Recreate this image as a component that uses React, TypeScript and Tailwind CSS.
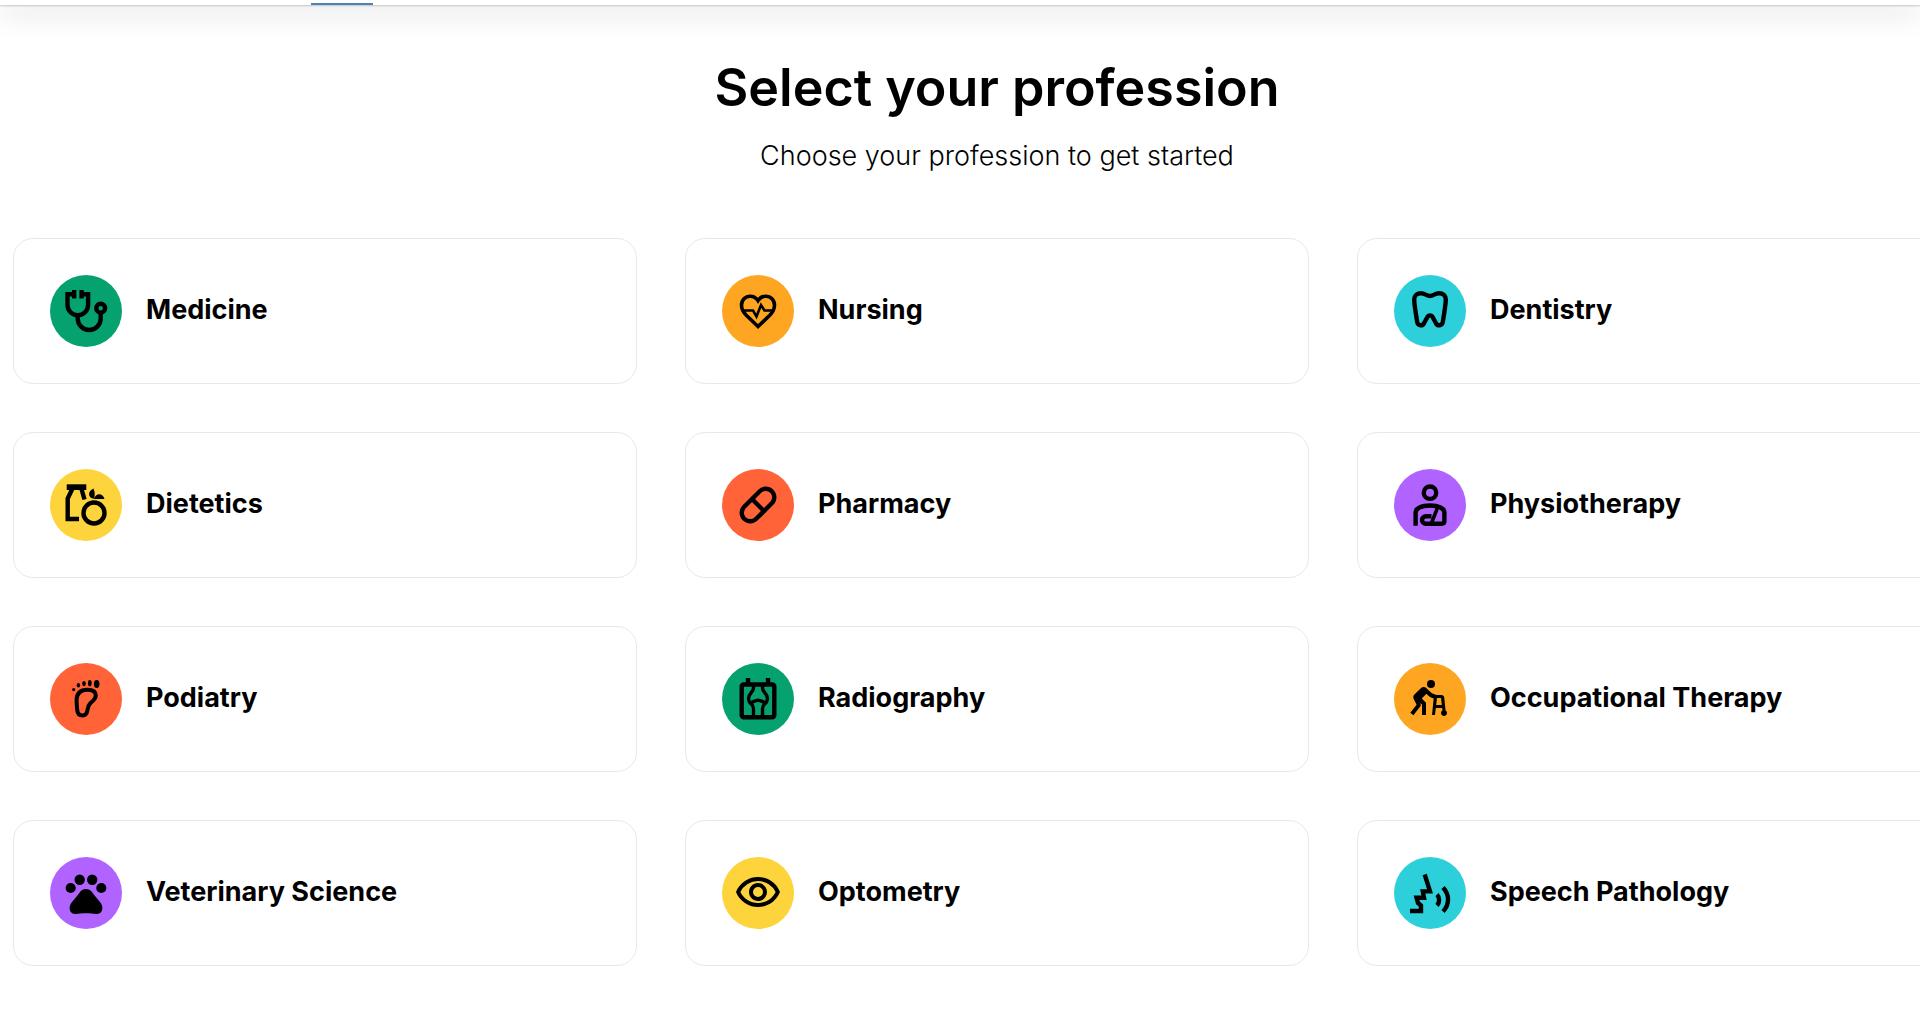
import type { ReactNode } from 'react';
import { MdAssistWalker, MdOutlineVisibility } from 'react-icons/md';

function Glyph({ children }: { children: ReactNode }) {
  return (
    <svg
      viewBox="0 0 72 72"
      className="size-full"
      fill="none"
      stroke="currentColor"
      strokeWidth="4.4"
      aria-hidden="true"
    >
      {children}
    </svg>
  );
}

const Stethoscope = () => (
  <Glyph>
    <path d="M25.5 19.3H17.5V30a10.3 10.3 0 0 0 20.6 0V19.3H30" />
    <path d="M24.2 15v8.6M31.6 15v8.6" />
    <path d="M27.7 40v3.5a11.5 11.5 0 0 0 23 0V38" />
    <circle cx="50.7" cy="33.2" r="4.4" />
  </Glyph>
);

const HeartPulse = () => (
  <Glyph>
    <path
      strokeWidth="3.6"
      d="M36 51.5 24.5 40.5C21.5 37.5 19.5 34.5 19.5 30.2c0-5.2 3.8-9 8.7-9 3.2 0 6 1.6 7.8 4.4 1.8-2.8 4.6-4.4 7.8-4.4 4.9 0 8.7 3.8 8.7 9 0 4.3-2 7.3-5 10.3z"
    />
    <path strokeWidth="2.6" d="M20 35.5h11l3.500 6 4.500-11.500 3.500 5.500H52" />
  </Glyph>
);

const Tooth = () => (
  <Glyph>
    <path d="M20.2 24.5c0-4 3-6.300 6.800-6.300s5.500 2.800 9 2.800 5-2.800 9-2.800 6.800 2.300 6.800 6.300c0 2-2 16.500-3 22.500-.6 3.800-5.300 4.400-6.800 1.200L38.600 42c-1-2.200-4.200-2.200-5.200 0L30 48.200c-1.500 3.200-6.200 2.600-6.800-1.200-1-6-3-20.500-3-22.500z" />
  </Glyph>
);

const Nutrition = () => (
  <Glyph>
    <path d="M22.5 19.5 17.7 29.5v20.5H29" />
    <path d="m31.5 20 3 10.5" />
    <path fill="currentColor" stroke="none" d="M16.7 15.3h19.6v5.7H16.7z" />
    <circle cx="44" cy="44" r="10.5" />
    <path
      fill="currentColor"
      stroke="none"
      d="M44 29.8c-6.5-.8-6.500-7.800-.5-10.300 1.700 4 1.500 7 .5 10.300zM44 30c1.500-6.500 9-6.500 10.500 0z"
    />
  </Glyph>
);

const Pill = () => (
  <Glyph>
    <g transform="rotate(-45 36 36)">
      <rect x="16.5" y="27.5" width="39" height="17" rx="8.5" />
      <path d="M36 27.5v17" />
    </g>
  </Glyph>
);

const ArmSling = () => (
  <Glyph>
    <circle cx="36" cy="23.7" r="6.2" />
    <path d="M21.6 56.800V43.500c0-4 5.500-7 14.400-7s14.400 3 14.400 7v8.500c0 1.600-1 2.700-2.700 2.700H32c-5.300 0-5.300-7.400 0-7.400h5.500" />
    <path strokeWidth="3.6" d="m44 37.500-6.500 16.500" />
  </Glyph>
);

const Foot = () => (
  <Glyph>
    <path
      strokeWidth="4"
      d="M37.5 26.7c5.800 0 8.300 2.300 8.300 5.800s-2.800 5-5.300 7.500c-2.200 2.200-2.700 4-3.100 7.200-.6 4-2.200 5.300-4.900 5.300-3.200 0-5-2-5.300-5.500-.2-3.500-.6-6.500-.6-9.500 0-7.500 4-10.800 10.900-10.800z"
    />
    <g fill="currentColor" stroke="none">
      <ellipse cx="46.7" cy="21" rx="2.8" ry="4" />
      <ellipse cx="39.8" cy="20.2" rx="1.9" ry="3.1" />
      <ellipse cx="34" cy="20.6" rx="1.8" ry="2.6" />
      <ellipse cx="28.4" cy="22.3" rx="1.7" ry="2.2" />
      <circle cx="23.7" cy="26.6" r="1.6" />
    </g>
  </Glyph>
);

const Xray = () => (
  <Glyph>
    <rect x="19.7" y="21.5" width="32.6" height="32.8" rx="2" />
    <path d="M26 15v6M46 15v6" />
    <path
      strokeWidth="3.4"
      d="M31.5 22v3c0 4-5 5.500-5 10.500 0 5.500 5 5 5 10V54M40.500 22v3c0 4 5 5.500 5 10.500 0 5.500-5 5-5 10V54"
    />
    <path strokeWidth="3.4" d="M27 39.5c3 1 5-2.300 9-2.300s6 3.300 9 2.300" />
  </Glyph>
);

const Walker = () => <MdAssistWalker className="size-12" aria-hidden="true" />;

const Paw = () => (
  <Glyph>
    <g fill="currentColor" stroke="none">
      <circle cx="29.7" cy="22.7" r="5.2" />
      <circle cx="42.2" cy="22.7" r="5.2" />
      <circle cx="20.7" cy="31" r="5.1" />
      <circle cx="51.3" cy="31" r="5.1" />
      <path d="M36 32c-3 0-4.800 1.200-6.500 3.700-2.500 3.500-5 6-7.500 9.300-4.500 5.500-2.300 12 3.500 12 3.500 0 6-.7 10.500-.7s7 .7 10.500.7c5.800 0 8-6.500 3.500-12-2.500-3.300-5-5.800-7.500-9.300C40.800 33.200 39 32 36 32z" />
    </g>
  </Glyph>
);

const Eye = () => <MdOutlineVisibility className="size-12" aria-hidden="true" />;

const Speech = () => (
  <Glyph>
    <path d="m30.7 17.5 5.300 16.900h-7.200l1.200 6.300h-7.500l1.500 5.300 3 2.500V54H16" />
    <path d="M43 37.5c2.800 3 2.800 8 0 11M49 30.500c6.700 7 6.700 17 0 24" />
  </Glyph>
);

const professions = [
  { name: 'Medicine', color: 'bg-[#05a26f]', Icon: Stethoscope },
  { name: 'Nursing', color: 'bg-[#fea621]', Icon: HeartPulse },
  { name: 'Dentistry', color: 'bg-[#2dd0da]', Icon: Tooth },
  { name: 'Dietetics', color: 'bg-[#fdd43b]', Icon: Nutrition },
  { name: 'Pharmacy', color: 'bg-[#ff6337]', Icon: Pill },
  { name: 'Physiotherapy', color: 'bg-[#b063ff]', Icon: ArmSling },
  { name: 'Podiatry', color: 'bg-[#ff6337]', Icon: Foot },
  { name: 'Radiography', color: 'bg-[#05a26f]', Icon: Xray },
  { name: 'Occupational Therapy', color: 'bg-[#fea621]', Icon: Walker },
  { name: 'Veterinary Science', color: 'bg-[#b063ff]', Icon: Paw },
  { name: 'Optometry', color: 'bg-[#fdd43b]', Icon: Eye },
  { name: 'Speech Pathology', color: 'bg-[#2dd0da]', Icon: Speech },
];

export default function App() {
  return (
    <div className="min-h-screen overflow-x-hidden bg-white font-['Inter',sans-serif] text-black">
      <header className="flex h-[5px] items-end bg-white pl-[311px] shadow-[0_1px_2px_rgba(0,0,0,0.2),0_6px_28px_rgba(0,0,0,0.3)]">
        <div className="h-0.5 w-[62px] bg-[#4a80bd]" />
      </header>
      <main className="-mr-[61px] ml-[13px] pt-[51px]">
        <h1 className="text-center text-[52px] leading-16 font-semibold">Select your profession</h1>
        <p className="mt-4 text-center text-[27px] leading-10 font-light">Choose your profession to get started</p>
        <ul className="mt-[62px] grid grid-cols-3 gap-12">
          {professions.map(({ name, color, Icon }) => (
            <li key={name}>
              <button
                type="button"
                className="flex w-full items-center gap-6 rounded-[20px] border border-[#e8e8e8] bg-white p-9 text-left"
              >
                <span className={`flex size-[72px] shrink-0 items-center justify-center rounded-full ${color}`}>
                  <Icon />
                </span>
                <span className="pb-0.5 text-[27px] leading-10 font-bold">{name}</span>
              </button>
            </li>
          ))}
        </ul>
      </main>
    </div>
  );
}
